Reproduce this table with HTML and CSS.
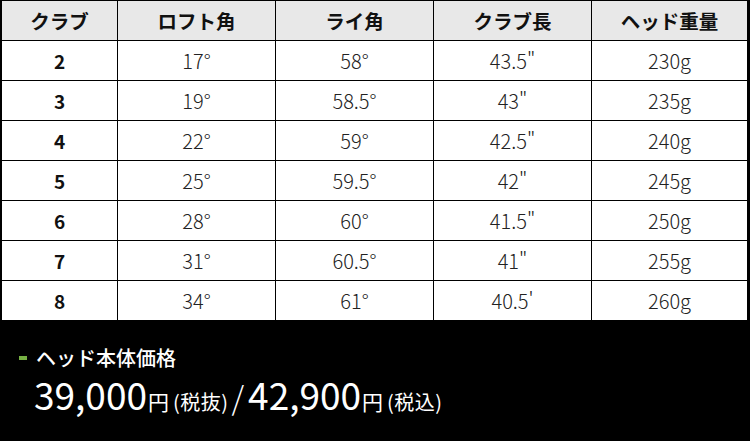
FILE: index.html
```html
<!DOCTYPE html>
<html lang="ja">
<head>
<meta charset="utf-8">
<link rel="stylesheet" href="styles.css">
</head>
<body>
<div class="page">
  <div class="specs">
    <table class="spec-table">
      <colgroup>
        <col class="c1"><col class="c2"><col class="c3"><col class="c4"><col class="c5">
      </colgroup>
      <thead>
        <tr><th>クラブ</th><th>ロフト角</th><th>ライ角</th><th>クラブ長</th><th>ヘッド重量</th></tr>
      </thead>
      <tbody>
        <tr><td class="num">2</td><td>17°</td><td>58°</td><td>43.5"</td><td>230g</td></tr>
        <tr><td class="num">3</td><td>19°</td><td>58.5°</td><td>43"</td><td>235g</td></tr>
        <tr><td class="num">4</td><td>22°</td><td>59°</td><td>42.5"</td><td>240g</td></tr>
        <tr><td class="num">5</td><td>25°</td><td>59.5°</td><td>42"</td><td>245g</td></tr>
        <tr><td class="num">6</td><td>28°</td><td>60°</td><td>41.5"</td><td>250g</td></tr>
        <tr><td class="num">7</td><td>31°</td><td>60.5°</td><td>41"</td><td>255g</td></tr>
        <tr><td class="num">8</td><td>34°</td><td>61°</td><td>40.5'</td><td>260g</td></tr>
      </tbody>
    </table>
  </div>
  <div class="price">
    <div class="price-label"><span class="dash"></span>ヘッド本体価格</div>
    <div class="price-value"><span class="amt">39,000</span><span class="yen">円</span><span class="tax">(税抜)</span><span class="slash">/</span><span class="amt">42,900</span><span class="yen">円</span><span class="tax">(税込)</span></div>
  </div>
</div>
</body>
</html>
```

FILE: styles.css
```css
* { box-sizing: border-box; }
html, body { margin: 0; padding: 0; }
body {
  background: #000;
  font-family: "Noto Sans CJK JP", "Noto Sans", sans-serif;
  width: 750px;
  height: 441px;
  overflow: hidden;
}
.page { width: 750px; }
.specs { padding: 0 2px 0 1px; }
.spec-table {
  width: 747px;
  table-layout: fixed;
  border-collapse: separate;
  border-spacing: 1px;
}
.c1 { width: 115px; }
.c2, .c3, .c4 { width: 157px; }
.c5 { width: 155px; }
.spec-table th, .spec-table td {
  height: 39px;
  padding: 0;
  text-align: center;
  vertical-align: middle;
  line-height: 1;
}
.spec-table th {
  background: #e8e8e8;
  color: #111;
  font-size: 19.5px;
  font-weight: 700;
}
.spec-table td {
  background: #fff;
  color: #222;
  font-size: 20px;
  font-weight: 300;
}
.spec-table td.num { font-weight: 700; color: #111; font-size: 19px; }
.price {
  padding: 26px 0 0 19px;
  color: #fff;
}
.price-label {
  display: flex;
  align-items: center;
  font-size: 20px;
  font-weight: 500;
  line-height: 22px;
}
.dash {
  width: 8px;
  height: 4px;
  background: #76b043;
  margin-right: 9px;
}
.price-value {
  display: flex;
  align-items: baseline;
  margin-top: 5px;
  padding-left: 15px;
  line-height: 40px;
}
.amt { font-size: 37px; font-weight: 400; }
.yen { font-size: 21px; font-weight: 400; margin-left: 1px; }
.tax { font-size: 20px; font-weight: 400; margin-left: 4px; letter-spacing: 0.5px; }
.slash { font-size: 32px; font-weight: 300; margin: 0 4px 0 3px; }
```
